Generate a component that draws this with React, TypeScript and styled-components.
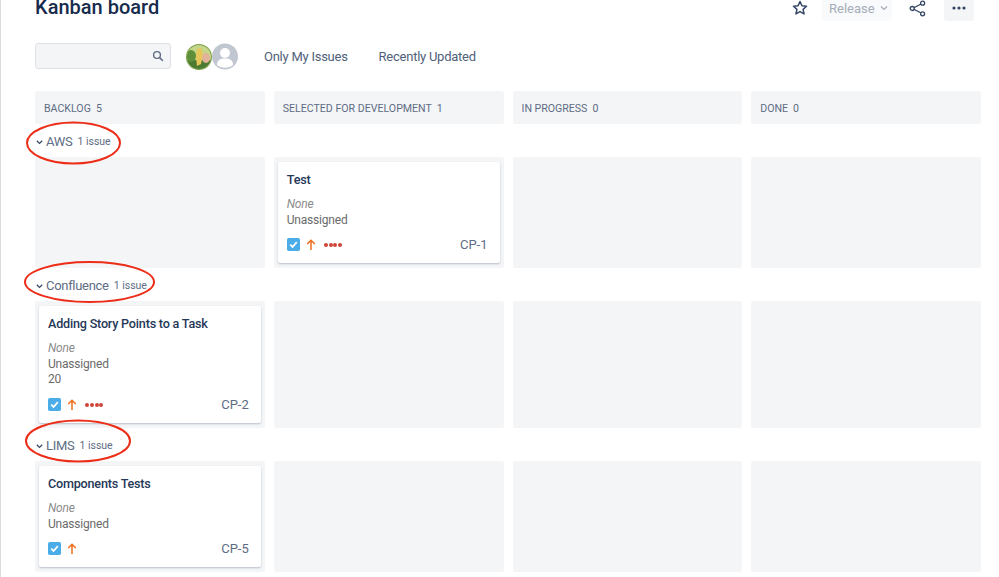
import React from "react";
import styled, { createGlobalStyle } from "styled-components";

const Global = createGlobalStyle`
  html, body { margin: 0; padding: 0; background: #fff; overflow: hidden; }
  body { font-family: Roboto, "Liberation Sans", sans-serif; }
  #root { width: 999px; height: 577px; overflow: hidden; }
`;

const Page = styled.div`
  position: relative;
  width: 999px;
  height: 577px;
  overflow: hidden;
  box-sizing: border-box;
  border-left: 1px solid #dcdcdc;
  padding: 0 18px 0 34px;
`;
const TopBar = styled.header`
  display: flex;
  align-items: flex-start;
  justify-content: space-between;
  height: 48px;
  margin-top: -5px;
`;
const Title = styled.h1`
  margin: 0;
  font-size: 20px;
  line-height: 24px;
  font-weight: 500;
  color: #172b4d;
`;
const Actions = styled.div`
  display: flex;
  align-items: center;
  height: 26px;
  margin-right: 7px;
`;
const IconSlot = styled.span<{ $w: number; $mr: number }>`
  display: flex;
  align-items: center;
  justify-content: center;
  width: ${(p) => p.$w}px;
  height: 26px;
  margin-right: ${(p) => p.$mr}px;
  color: #344563;
`;
const ReleaseButton = styled.div`
  display: flex;
  align-items: center;
  gap: 5px;
  box-sizing: border-box;
  width: 70px;
  height: 26px;
  padding-left: 7px;
  margin-right: 16px;
  border-radius: 3px;
  background: #f9fafb;
  color: #a5adba;
  font-size: 13px;
`;
const MoreButton = styled.div`
  display: flex;
  align-items: center;
  justify-content: center;
  width: 30px;
  height: 26px;
  border-radius: 3px;
  background: #f4f5f7;
`;
const Filters = styled.div`
  display: flex;
  align-items: center;
  height: 27px;
  margin-bottom: 21px;
`;
const Search = styled.div`
  display: flex;
  align-items: center;
  justify-content: flex-end;
  align-self: flex-start;
  box-sizing: border-box;
  width: 136px;
  height: 26px;
  padding-right: 6px;
  background: #f4f5f7;
  border: 1px solid #dfe1e6;
  border-radius: 3px;
  color: #5e6c84;
`;
const Avatars = styled.div`
  display: flex;
  margin: 0 26px 0 15px;
`;
const FilterLink = styled.span`
  font-size: 13px;
  letter-spacing: -0.25px;
  color: #505f79;
  margin-right: 31px;
`;
const Grid = styled.div`
  display: grid;
  grid-template-columns: repeat(4, 1fr);
  gap: 9px;
  width: 946px;
`;
const ColumnHead = styled.div`
  display: flex;
  align-items: center;
  gap: 5px;
  box-sizing: border-box;
  height: 33px;
  padding: 1px 0 0 9px;
  background: #f4f5f7;
  border-radius: 3px;
  font-size: 10.6px;
  color: #5e6c84;
`;
const LaneHead = styled.div`
  display: flex;
  align-items: center;
  box-sizing: border-box;
  height: 33px;
  padding-top: 2px;
  padding-left: 1px;
  color: #5e6c84;
`;
const LaneName = styled.span`
  font-size: 13px;
  letter-spacing: -0.3px;
  margin: 0 5px 0 3px;
`;
const LaneCount = styled.span`
  font-size: 10.5px;
`;
const Cell = styled.div<{ $h: number }>`
  box-sizing: border-box;
  height: ${(p) => p.$h}px;
  padding: 5px 4px;
  background: #f4f5f7;
  border-radius: 3px;
`;
const Card = styled.article`
  box-sizing: border-box;
  height: 100%;
  padding: 10px 12px 0 9px;
  background: #fff;
  border-radius: 2px;
  box-shadow: 0 1px 2px rgba(9, 30, 66, 0.25);
  display: flex;
  flex-direction: column;
`;
const CardTitle = styled.div`
  font-size: 12.6px;
  letter-spacing: -0.2px;
  line-height: 15px;
  font-weight: 500;
  color: #253858;
  margin-bottom: 10px;
`;
const Field = styled.div<{ $muted?: boolean }>`
  font-size: 12px;
  letter-spacing: -0.2px;
  line-height: 15.5px;
  color: ${(p) => (p.$muted ? "#8c8c8c" : "#6b6b6b")};
  font-style: ${(p) => (p.$muted ? "italic" : "normal")};
`;
const CardFoot = styled.div`
  display: flex;
  align-items: center;
  margin-top: auto;
  margin-bottom: 11px;
`;
const ArrowGap = styled.span`
  width: 6px;
`;
const Key = styled.span`
  margin-left: auto;
  font-size: 13px;
  color: #5e6c84;
`;
const Dots = styled.span`
  display: flex;
  gap: 0.8px;
  margin-left: 8px;
`;
const Dot = styled.i`
  width: 4px;
  height: 4px;
  border-radius: 50%;
  background: #d04437;
`;
const Marks = styled.svg`
  position: absolute;
  left: -1px;
  top: 0;
  pointer-events: none;
`;

const Chevron = () => (
  <svg width="7" height="8" viewBox="0 0 7 8"><path d="M.8 2.800 3.500 5.400l2.700-2.600" fill="none" stroke="#344563" strokeWidth="1.2" /></svg>
);
const Story = () => (
  <svg width="13" height="13" viewBox="0 0 12 12">
    <rect width="12" height="12" rx="1.600" fill="#4bade8" />
    <path d="M3 6.200 5.100 8.300 9 3.900" fill="none" stroke="#fff" strokeWidth="1.700" />
  </svg>
);
const Arrow = () => (
  <svg width="10" height="12" viewBox="0 0 10 12">
    <path d="M5 11V1.500M1.200 5 5 1.200 8.800 5" fill="none" stroke="#f06f1e" strokeWidth="1.500" />
  </svg>
);

const CardBody = ({ title, extra, id, dots }: { title: string; extra?: string; id: string; dots: boolean }) => (
  <Card>
    <CardTitle>{title}</CardTitle>
    <Field $muted>None</Field>
    <Field>Unassigned</Field>
    {extra && <Field>{extra}</Field>}
    <CardFoot>
      <Story />
      <ArrowGap />
      <Arrow />
      {dots && (
        <Dots>
          <Dot /><Dot /><Dot /><Dot />
        </Dots>
      )}
      <Key>{id}</Key>
    </CardFoot>
  </Card>
);

const Lane = ({ name, count, h, col, children }: { name: string; count: string; h: number; col: number; children: React.ReactNode }) => (
  <>
    <LaneHead><Chevron /><LaneName>{name}</LaneName><LaneCount>{count}</LaneCount></LaneHead>
    <Grid>
      {[0, 1, 2, 3].map((i) => (
        <Cell key={i} $h={h}>{i === col ? children : null}</Cell>
      ))}
    </Grid>
  </>
);

export default function App() {
  return (
    <Page>
      <Global />
      <TopBar>
        <Title>Kanban board</Title>
        <Actions>
          <IconSlot $w={16} $mr={14}>
            <svg width="16" height="16" viewBox="0 0 15 15"><path d="M7.500 1.400 9.300 5.400l4.300.5-3.200 2.900.9 4.300-3.800-2.200-3.800 2.200.9-4.300L1.400 5.900l4.300-.5z" fill="none" stroke="#344563" strokeWidth="1.400" strokeLinejoin="round" /></svg>
          </IconSlot>
          <ReleaseButton>
            Release
            <svg width="8" height="8" viewBox="0 0 8 8"><path d="M1 2.600 4 5.400l3-2.800" fill="none" stroke="#a5adba" strokeWidth="1.300" /></svg>
          </ReleaseButton>
          <IconSlot $w={18} $mr={18}>
            <svg width="17" height="17" viewBox="0 0 17 17"><path d="M13.500 3.200 3.500 8.500l10 5.300" fill="none" stroke="#344563" strokeWidth="1.300" /><circle cx="13.600" cy="3.200" r="2" fill="#fff" stroke="#344563" strokeWidth="1.300" /><circle cx="3.200" cy="8.500" r="2" fill="#fff" stroke="#344563" strokeWidth="1.300" /><circle cx="13.600" cy="13.800" r="2" fill="#fff" stroke="#344563" strokeWidth="1.300" /></svg>
          </IconSlot>
          <MoreButton>
            <svg width="14" height="4" viewBox="0 0 14 4"><circle cx="2" cy="2" r="1.600" fill="#344563" /><circle cx="7" cy="2" r="1.600" fill="#344563" /><circle cx="12" cy="2" r="1.600" fill="#344563" /></svg>
          </MoreButton>
        </Actions>
      </TopBar>
      <Filters>
        <Search>
          <svg width="12" height="12" viewBox="0 0 12 12"><circle cx="5" cy="5" r="3.400" fill="none" stroke="#5e6c84" strokeWidth="1.400" /><path d="m7.600 7.600 3.200 3.200" stroke="#5e6c84" strokeWidth="1.600" /></svg>
        </Search>
        <Avatars>
          <svg width="26" height="27" viewBox="0 0 26 27">
            <defs><clipPath id="av"><circle cx="13" cy="14" r="12" /></clipPath></defs>
            <circle cx="13" cy="14" r="13" fill="#7ea04a" />
            <g clipPath="url(#av)">
              <rect y="2" width="26" height="24" fill="#c3d68a" />
              <rect y="17" width="26" height="9" fill="#4c7a30" />
              <ellipse cx="5" cy="13" rx="5" ry="6" fill="#5f8f3a" />
              <path d="M11 6 15 5 17 11 15 21 11 23 10 14z" fill="#e7c65a" />
              <ellipse cx="20" cy="15" rx="4" ry="5" fill="#e3b29a" />
            </g>
          </svg>
          <svg width="26" height="27" viewBox="0 0 26 27">
            <circle cx="13" cy="13.500" r="13" fill="#c1c7d0" />
            <circle cx="13" cy="10" r="5" fill="#fff" />
            <path d="M5 22c0-5 3-6.500 8-6.500s8 1.500 8 6.500c-2 1.800-5 2.800-8 2.800S7 23.800 5 22z" fill="#fff" />
          </svg>
        </Avatars>
        <FilterLink>Only My Issues</FilterLink>
        <FilterLink>Recently Updated</FilterLink>
      </Filters>
      <Grid>
        <ColumnHead><span>BACKLOG</span><span>5</span></ColumnHead>
        <ColumnHead><span>SELECTED FOR DEVELOPMENT</span><span>1</span></ColumnHead>
        <ColumnHead><span>IN PROGRESS</span><span>0</span></ColumnHead>
        <ColumnHead><span>DONE</span><span>0</span></ColumnHead>
      </Grid>
      <Lane name="AWS" count="1 issue" h={111} col={1}>
        <CardBody title="Test" id="CP-1" dots />
      </Lane>
      <Lane name="Confluence" count="1 issue" h={127} col={0}>
        <CardBody title="Adding Story Points to a Task" extra="20" id="CP-2" dots />
      </Lane>
      <Lane name="LIMS" count="1 issue" h={111} col={0}>
        <CardBody title="Components Tests" id="CP-5" dots={false} />
      </Lane>
      <Marks width="999" height="577" viewBox="0 0 999 577" fill="none" stroke="#ec2d17" strokeWidth="2">
        <ellipse cx="73.500" cy="143" rx="46.500" ry="20.500" />
        <ellipse cx="89.500" cy="282" rx="64.500" ry="20" />
        <ellipse cx="78" cy="441" rx="52" ry="20.500" />
      </Marks>
    </Page>
  );
}
